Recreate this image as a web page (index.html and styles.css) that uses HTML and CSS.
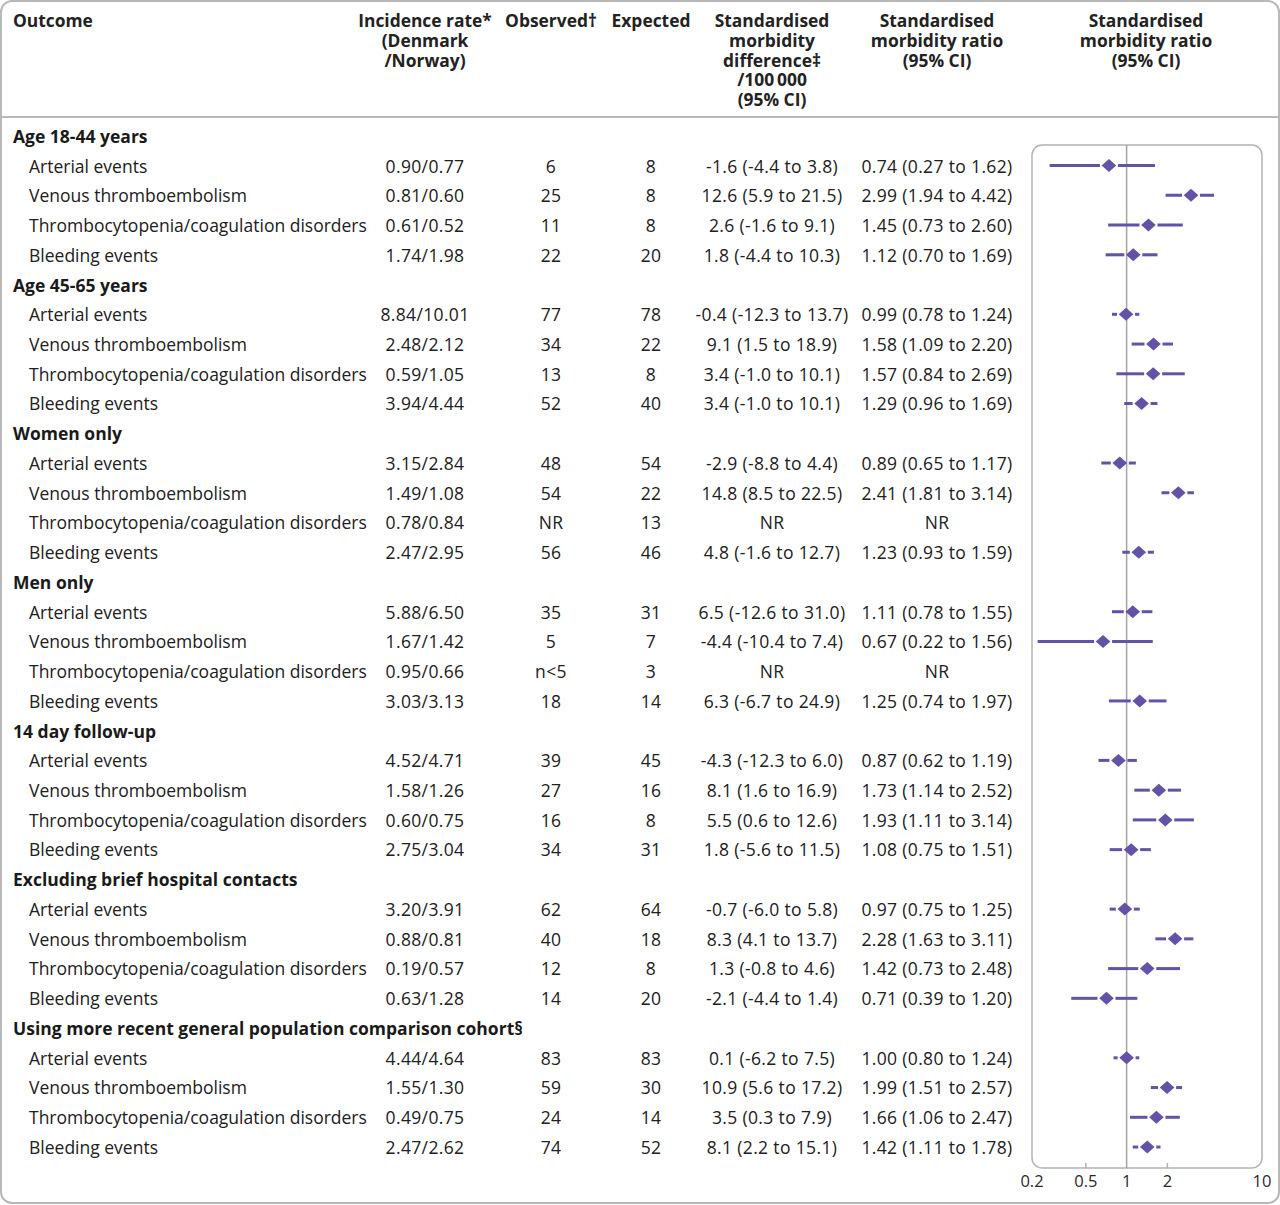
FILE: index.html
```html
<!DOCTYPE html>
<html lang="en">
<head>
<meta charset="utf-8">
<title>Standardised morbidity ratios</title>
<link rel="stylesheet" href="styles.css">
</head>
<body>
<div class="fig">
  <div class="head">
    <div class="hc first">Outcome</div>
    <div class="hc"><span>Incidence rate*<br>(Denmark<br>/Norway)</span></div>
    <div class="hc"><span>Observed†</span></div>
    <div class="hc"><span>Expected</span></div>
    <div class="hc"><span>Standardised<br>morbidity<br>difference‡<br>/100&#8201;000<br>(95% CI)</span></div>
    <div class="hc"><span>Standardised<br>morbidity ratio<br>(95% CI)</span></div>
    <div class="hc"><span>Standardised<br>morbidity ratio<br>(95% CI)</span></div>
  </div>
  <div class="main">
    <div class="rows">
      <div class="sec">Age 18-44 years</div>
      <div class="o">Arterial events</div><div class="v">0.90/0.77</div><div class="v">6</div><div class="v">8</div><div class="v">-1.6 (-4.4 to 3.8)</div><div class="v">0.74 (0.27 to 1.62)</div>
      <div class="o">Venous thromboembolism</div><div class="v">0.81/0.60</div><div class="v">25</div><div class="v">8</div><div class="v">12.6 (5.9 to 21.5)</div><div class="v">2.99 (1.94 to 4.42)</div>
      <div class="o">Thrombocytopenia/coagulation disorders</div><div class="v">0.61/0.52</div><div class="v">11</div><div class="v">8</div><div class="v">2.6 (-1.6 to 9.1)</div><div class="v">1.45 (0.73 to 2.60)</div>
      <div class="o">Bleeding events</div><div class="v">1.74/1.98</div><div class="v">22</div><div class="v">20</div><div class="v">1.8 (-4.4 to 10.3)</div><div class="v">1.12 (0.70 to 1.69)</div>

      <div class="sec">Age 45-65 years</div>
      <div class="o">Arterial events</div><div class="v">8.84/10.01</div><div class="v">77</div><div class="v">78</div><div class="v">-0.4 (-12.3 to 13.7)</div><div class="v">0.99 (0.78 to 1.24)</div>
      <div class="o">Venous thromboembolism</div><div class="v">2.48/2.12</div><div class="v">34</div><div class="v">22</div><div class="v">9.1 (1.5 to 18.9)</div><div class="v">1.58 (1.09 to 2.20)</div>
      <div class="o">Thrombocytopenia/coagulation disorders</div><div class="v">0.59/1.05</div><div class="v">13</div><div class="v">8</div><div class="v">3.4 (-1.0 to 10.1)</div><div class="v">1.57 (0.84 to 2.69)</div>
      <div class="o">Bleeding events</div><div class="v">3.94/4.44</div><div class="v">52</div><div class="v">40</div><div class="v">3.4 (-1.0 to 10.1)</div><div class="v">1.29 (0.96 to 1.69)</div>

      <div class="sec">Women only</div>
      <div class="o">Arterial events</div><div class="v">3.15/2.84</div><div class="v">48</div><div class="v">54</div><div class="v">-2.9 (-8.8 to 4.4)</div><div class="v">0.89 (0.65 to 1.17)</div>
      <div class="o">Venous thromboembolism</div><div class="v">1.49/1.08</div><div class="v">54</div><div class="v">22</div><div class="v">14.8 (8.5 to 22.5)</div><div class="v">2.41 (1.81 to 3.14)</div>
      <div class="o">Thrombocytopenia/coagulation disorders</div><div class="v">0.78/0.84</div><div class="v">NR</div><div class="v">13</div><div class="v">NR</div><div class="v">NR</div>
      <div class="o">Bleeding events</div><div class="v">2.47/2.95</div><div class="v">56</div><div class="v">46</div><div class="v">4.8 (-1.6 to 12.7)</div><div class="v">1.23 (0.93 to 1.59)</div>

      <div class="sec">Men only</div>
      <div class="o">Arterial events</div><div class="v">5.88/6.50</div><div class="v">35</div><div class="v">31</div><div class="v">6.5 (-12.6 to 31.0)</div><div class="v">1.11 (0.78 to 1.55)</div>
      <div class="o">Venous thromboembolism</div><div class="v">1.67/1.42</div><div class="v">5</div><div class="v">7</div><div class="v">-4.4 (-10.4 to 7.4)</div><div class="v">0.67 (0.22 to 1.56)</div>
      <div class="o">Thrombocytopenia/coagulation disorders</div><div class="v">0.95/0.66</div><div class="v">n&lt;5</div><div class="v">3</div><div class="v">NR</div><div class="v">NR</div>
      <div class="o">Bleeding events</div><div class="v">3.03/3.13</div><div class="v">18</div><div class="v">14</div><div class="v">6.3 (-6.7 to 24.9)</div><div class="v">1.25 (0.74 to 1.97)</div>

      <div class="sec">14 day follow-up</div>
      <div class="o">Arterial events</div><div class="v">4.52/4.71</div><div class="v">39</div><div class="v">45</div><div class="v">-4.3 (-12.3 to 6.0)</div><div class="v">0.87 (0.62 to 1.19)</div>
      <div class="o">Venous thromboembolism</div><div class="v">1.58/1.26</div><div class="v">27</div><div class="v">16</div><div class="v">8.1 (1.6 to 16.9)</div><div class="v">1.73 (1.14 to 2.52)</div>
      <div class="o">Thrombocytopenia/coagulation disorders</div><div class="v">0.60/0.75</div><div class="v">16</div><div class="v">8</div><div class="v">5.5 (0.6 to 12.6)</div><div class="v">1.93 (1.11 to 3.14)</div>
      <div class="o">Bleeding events</div><div class="v">2.75/3.04</div><div class="v">34</div><div class="v">31</div><div class="v">1.8 (-5.6 to 11.5)</div><div class="v">1.08 (0.75 to 1.51)</div>

      <div class="sec">Excluding brief hospital contacts</div>
      <div class="o">Arterial events</div><div class="v">3.20/3.91</div><div class="v">62</div><div class="v">64</div><div class="v">-0.7 (-6.0 to 5.8)</div><div class="v">0.97 (0.75 to 1.25)</div>
      <div class="o">Venous thromboembolism</div><div class="v">0.88/0.81</div><div class="v">40</div><div class="v">18</div><div class="v">8.3 (4.1 to 13.7)</div><div class="v">2.28 (1.63 to 3.11)</div>
      <div class="o">Thrombocytopenia/coagulation disorders</div><div class="v">0.19/0.57</div><div class="v">12</div><div class="v">8</div><div class="v">1.3 (-0.8 to 4.6)</div><div class="v">1.42 (0.73 to 2.48)</div>
      <div class="o">Bleeding events</div><div class="v">0.63/1.28</div><div class="v">14</div><div class="v">20</div><div class="v">-2.1 (-4.4 to 1.4)</div><div class="v">0.71 (0.39 to 1.20)</div>

      <div class="sec">Using more recent general population comparison cohort§</div>
      <div class="o">Arterial events</div><div class="v">4.44/4.64</div><div class="v">83</div><div class="v">83</div><div class="v">0.1 (-6.2 to 7.5)</div><div class="v">1.00 (0.80 to 1.24)</div>
      <div class="o">Venous thromboembolism</div><div class="v">1.55/1.30</div><div class="v">59</div><div class="v">30</div><div class="v">10.9 (5.6 to 17.2)</div><div class="v">1.99 (1.51 to 2.57)</div>
      <div class="o">Thrombocytopenia/coagulation disorders</div><div class="v">0.49/0.75</div><div class="v">24</div><div class="v">14</div><div class="v">3.5 (0.3 to 7.9)</div><div class="v">1.66 (1.06 to 2.47)</div>
      <div class="o">Bleeding events</div><div class="v">2.47/2.62</div><div class="v">74</div><div class="v">52</div><div class="v">8.1 (2.2 to 15.1)</div><div class="v">1.42 (1.11 to 1.78)</div>
    </div>
    <div class="plot">
      <svg id="forest" class="forest" width="264" height="1083" viewBox="0 0 264 1083"></svg>
    </div>
  </div>
</div>
<script src="script.js"></script>
</body>
</html>
```
FILE: styles.css
```css
* { box-sizing: border-box; }
html, body { margin: 0; padding: 0; background: #ffffff; }
body {
  font-family: "Open Sans", "Noto Sans", "DejaVu Sans", sans-serif;
  color: #202020;
  width: 1280px;
  height: 1205px;
  overflow: hidden;
}
.fig {
  width: 1280px;
  height: 1204px;
  border: 2px solid #b8b8b8;
  border-radius: 12px;
  display: flex;
  flex-direction: column;
  overflow: hidden;
}
.head {
  display: grid;
  grid-template-columns: 364px 118px 134px 66px 176px 154px 1fr;
  height: 116px;
  padding-top: 9px;
  border-bottom: 2px solid #b8b8b8;
  font-weight: 700;
  font-size: 17.4px;
  line-height: 19.75px;
  color: #222;
}
.hc {
  display: flex;
  justify-content: center;
  text-align: center;
  white-space: nowrap;
}
.hc.first { justify-content: flex-start; padding-left: 11px; }
.main {
  display: flex;
  flex: 1;
}
.rows {
  width: 1012px;
  padding-top: 3px;
  display: grid;
  grid-template-columns: 364px 118px 134px 66px 176px 154px;
  grid-auto-rows: 29.74px;
  font-size: 17.5px;
  white-space: nowrap;
}
.sec {
  grid-column: 1 / -1;
  padding-left: 11px;
  font-weight: 700;
  display: flex;
  align-items: center;
  color: #1a1a1a;
}
.o {
  padding-left: 27px;
  display: flex;
  align-items: center;
}
.v {
  display: flex;
  align-items: center;
  justify-content: center;
  letter-spacing: 0.35px;
}
.plot { width: 264px; }
.forest { display: block; }
.forest .box { fill: none; stroke: #b3b3b3; stroke-width: 1.5; }
.forest .ref { stroke: #a3a3a3; stroke-width: 1.5; }
.forest .tick { stroke: #b3b3b3; stroke-width: 1.5; }
.forest .ci { stroke: #6452a6; stroke-width: 3; }
.forest .pt { fill: #6452a6; }
.forest .lab { font-family: "Open Sans", "Noto Sans", sans-serif; font-size: 16.5px; fill: #2a2a2a; }
```
FILE: script.js
```js
(function () {
  var data = [
    null, [0.74, 0.27, 1.62], [2.99, 1.94, 4.42], [1.45, 0.73, 2.60], [1.12, 0.70, 1.69],
    null, [0.99, 0.78, 1.24], [1.58, 1.09, 2.20], [1.57, 0.84, 2.69], [1.29, 0.96, 1.69],
    null, [0.89, 0.65, 1.17], [2.41, 1.81, 3.14], null, [1.23, 0.93, 1.59],
    null, [1.11, 0.78, 1.55], [0.67, 0.22, 1.56], null, [1.25, 0.74, 1.97],
    null, [0.87, 0.62, 1.19], [1.73, 1.14, 2.52], [1.93, 1.11, 3.14], [1.08, 0.75, 1.51],
    null, [0.97, 0.75, 1.25], [2.28, 1.63, 3.11], [1.42, 0.73, 2.48], [0.71, 0.39, 1.20],
    null, [1.00, 0.80, 1.24], [1.99, 1.51, 2.57], [1.66, 1.06, 2.47], [1.42, 1.11, 1.78]
  ];
  var NS = "http://www.w3.org/2000/svg";
  var svg = document.getElementById("forest");
  var X0 = 18, X1 = 248, LMIN = Math.log10(0.2), LMAX = 1;
  var TOP = 3, RH = 29.74, BOXT = 27, BOXB = 1050;
  function x(v) { return X0 + (Math.log10(v) - LMIN) / (LMAX - LMIN) * (X1 - X0); }
  function el(tag, attrs, text) {
    var e = document.createElementNS(NS, tag);
    for (var k in attrs) e.setAttribute(k, attrs[k]);
    if (text) e.textContent = text;
    svg.appendChild(e);
    return e;
  }
  el("rect", { "class": "box", x: X0, y: BOXT, width: X1 - X0, height: BOXB - BOXT, rx: 10, ry: 10 });
  el("line", { "class": "ref", x1: x(1), y1: BOXT, x2: x(1), y2: BOXB });
  [0.5, 2].forEach(function (t) {
    el("line", { "class": "tick", x1: x(t), y1: BOXB - 5, x2: x(t), y2: BOXB });
  });
  [["0.2", 0.2], ["0.5", 0.5], ["1", 1], ["2", 2], ["10", 10]].forEach(function (l) {
    el("text", { "class": "lab", x: x(l[1]), y: 1069, "text-anchor": "middle" }, l[0]);
  });
  var HW = 7.3, HH = 6.5, GAP = 9;
  data.forEach(function (d, i) {
    if (!d) return;
    var cy = TOP + (i + 0.5) * RH;
    var px = x(d[0]), lo = x(d[1]), hi = x(d[2]);
    if (px - GAP > lo) el("line", { "class": "ci", x1: lo, y1: cy, x2: px - GAP, y2: cy });
    if (hi > px + GAP) el("line", { "class": "ci", x1: px + GAP, y1: cy, x2: hi, y2: cy });
    el("polygon", { "class": "pt", points: [px - HW, cy, px, cy - HH, px + HW, cy, px, cy + HH].join(" ") });
  });
})();
```
